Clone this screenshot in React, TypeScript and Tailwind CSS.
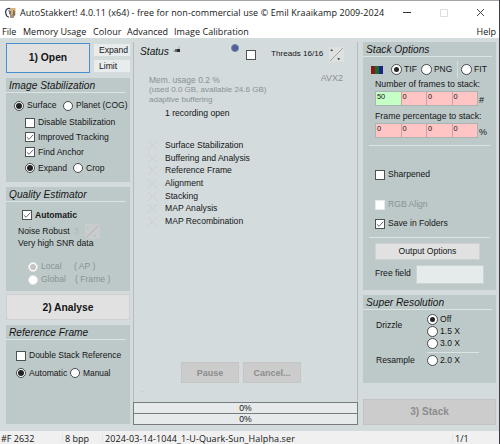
import type { ReactNode } from 'react';
import { clsx } from 'clsx';

interface ControlProps {
  label?: string;
  checked?: boolean;
  disabled?: boolean;
  bold?: boolean;
  large?: boolean;
  className?: string;
}

function Radio({ label, checked, disabled, large, className }: ControlProps) {
  return (
    <label
      className={clsx(
        'flex shrink-0 items-center whitespace-pre',
        large ? 'gap-[2px]' : 'gap-[3px]',
        disabled && 'text-[#899294]',
        className,
      )}
    >
      <span
        className={clsx(
          'flex shrink-0 items-center justify-center rounded-full border bg-white',
          large ? 'size-[11px]' : 'size-[10px]',
          disabled ? 'border-[#dfe3e3]' : 'border-[#454a4a]',
        )}
      >
        {checked && (
          <span
            className={clsx(
              'shrink-0 rounded-full',
              large ? 'size-[5px]' : 'size-[6px]',
              disabled ? 'bg-[#c4c4c4]' : 'bg-[#222]',
            )}
          />
        )}
      </span>
      {label}
    </label>
  );
}

function Check({ label, checked, disabled, bold, className }: ControlProps) {
  return (
    <label
      className={clsx(
        'flex shrink-0 items-center gap-[3px] whitespace-pre',
        disabled && 'text-[#899294]',
        bold && 'font-bold',
        className,
      )}
    >
      <span
        className={clsx(
          'flex size-[10px] shrink-0 items-center justify-center border bg-white',
          disabled ? 'border-[#e6eaea]' : 'border-[#4d5252]',
        )}
      >
        {checked && (
          <svg viewBox="0 0 8 8" className="size-2 shrink-0" fill="none" stroke="#555" strokeWidth="0.9">
            <path d="M0.8 4.2 3 6.3 7.3 1.7" />
          </svg>
        )}
      </span>
      {label}
    </label>
  );
}

function Spin({ faded, className }: { faded?: boolean; className?: string }) {
  return (
    <svg viewBox="0 0 15 15" className={clsx('size-[15px] shrink-0', className)}>
      <path d="M0 0h15v15H0z" fill={faded ? '#c9cccc' : '#dfe0e0'} />
      <path d="M1 14 14 1" stroke={faded ? '#b5a9a9' : '#8d9191'} strokeWidth="0.8" />
      <path
        d="M1.7 3.6h2L2.7 2.4zM8.7 11.6h2l-1 1.2z"
        fill={faded ? '#b3a5a5' : '#111'}
        stroke={faded ? 'none' : '#111'}
        strokeWidth="0.4"
      />
    </svg>
  );
}

function Panel({ title, className, children }: { title: string; className?: string; children: ReactNode }) {
  return (
    <section className={clsx('shrink-0 bg-[#bdc9c9]', className)}>
      <h2 className="mr-1 flex h-[15px] items-center border-b border-[#dce3e3] pt-[2px] pl-[3px] text-[10.2px] whitespace-nowrap italic">
        {title}
      </h2>
      {children}
    </section>
  );
}

function Row({ className, children }: { className?: string; children: ReactNode }) {
  return <div className={clsx('flex items-center whitespace-nowrap', className)}>{children}</div>;
}

function Cells({ values, unit }: { values: string[]; unit: string }) {
  return (
    <Row className="ml-3 h-[15px]">
      <div className="flex h-[15px] w-[103px] border border-[#abb3b3]">
        {values.map((v, i) => (
          <span
            key={i}
            className={clsx(
              'flex-1 pl-[1px] text-[7.4px] leading-[10px]',
              i > 0 && 'border-l border-[#c6a5a5]',
              v === '50' ? 'bg-[#c5ffc5]' : 'bg-[#ffc5c5]',
            )}
          >
            {v}
          </span>
        ))}
      </div>
      <span className="pt-1 pl-[1px] text-[9px]">{unit}</span>
    </Row>
  );
}

const STEPS = [
  'Surface Stabilization',
  'Buffering and Analysis',
  'Reference Frame',
  'Alignment',
  'Stacking',
  'MAP Analysis',
  'MAP Recombination',
];

function TitleBar() {
  return (
    <header className="flex h-6 items-center border-t border-[#a5a5a5] pl-[5px] font-['Open_Sans','Noto_Sans',sans-serif] text-[9px] whitespace-nowrap">
      <svg viewBox="0 0 12 12" className="size-3 shrink-0">
        <path d="M5 1h5.5v7L8 11H5z" fill="#d5b17b" />
        <path d="M5 1.5C1 1 .3 4 .8 6.5S3 10 4 10" fill="none" stroke="#26304c" strokeWidth="1.2" />
        <path d="M4 4v3l2 1V4zM8 3v5l2 1V4z" fill="#89705a" />
        <path d="M6 8v3M8 7v4M3 4l2-1" stroke="#5b6689" strokeWidth="0.8" />
      </svg>
      <span className="w-[365px] pl-[3px] tracking-[0.08px]">
        AutoStakkert! 4.0.11 (x64) - free for non-commercial use © Emil Kraaikamp 2009-2024
      </span>
      <svg viewBox="0 0 84 10" className="ml-[20px] h-[10px] w-[84px] shrink-0" fill="none" stroke="#333">
        <path d="M1 4.5h8" />
        <path d="M38.5 1.5h7v7h-7z" stroke="#ddd" />
        <path d="m75 1 7 7m0-7-7 7" strokeWidth="0.9" />
      </svg>
    </header>
  );
}

function MenuBar() {
  return (
    <nav className="flex h-[14px] items-center pr-[3px] pl-[2px] font-['Open_Sans','Noto_Sans',sans-serif] text-[9px] whitespace-nowrap">
      <span className="w-[21px]">File</span>
      <span className="w-[70px]">Memory Usage</span>
      <span className="w-[34px] tracking-[0.1px]">Colour</span>
      <span className="w-[47px]">Advanced</span>
      <span className="tracking-[0.05px]">Image Calibration</span>
      <span className="ml-auto">Help</span>
    </nav>
  );
}

function LeftColumn() {
  return (
    <aside className="flex w-[133px] shrink-0 flex-col pt-[5px] pl-[6px]">
      <div className="flex h-[30px] w-[124px] items-center justify-between">
        <button className="h-[30px] w-[84px] border border-[#4a90cf] bg-[#e1e1e1] text-[10.3px] font-bold">1) Open</button>
        <div className="flex w-9 flex-col gap-1">
          <button className="h-3 bg-[#e9eced] pl-[5px] text-left">Expand</button>
          <button className="h-3 bg-[#e9eced] pl-[5px] text-left">Limit</button>
        </div>
      </div>

      <Panel title="Image Stabilization" className="mt-[5px] h-[104px] w-[124px]">
        <Row className="h-6 pt-[1px] pl-2">
          <Radio label="Surface" checked className="w-[49px]" />
          <Radio label="Planet (COG)" className="text-[8.5px]" />
        </Row>
        <div className="pl-[19px]">
          <Row className="h-[11px]">
            <Check label="Disable Stabilization" />
          </Row>
          <Row className="mt-1 h-[10px]">
            <Check label="Improved Tracking" checked />
          </Row>
          <Row className="mt-[5px] h-[10px]">
            <Check label="Find Anchor" checked />
          </Row>
          <Row className="mt-[6px] h-[10px]">
            <Radio label="Expand" checked className="w-[48px]" />
            <Radio label="Crop" />
          </Row>
        </div>
      </Panel>

      <Panel title="Quality Estimator" className="mt-[5px] h-[104px] w-[124px]">
        <Row className="h-[22px] pt-1 pl-4">
          <Check label="Automatic" checked bold />
        </Row>
        <Row className="h-[15px] pl-3">
          <span className="w-[56px]">Noise Robust</span>
          <span className="w-[11px] text-[#aeb8b9]">3</span>
          <Spin faded />
        </Row>
        <Row className="h-2 pl-3">Very high SNR data</Row>
        <Row className="mt-[13px] h-[13px] pl-[22px]">
          <Radio label="Local" disabled checked className="w-[46px]" />
          <span className="text-[#899294]">( AP )</span>
        </Row>
        <Row className="h-[13px] pl-[22px]">
          <Radio label="Global" disabled className="w-[47px]" />
          <span className="text-[#899294]">( Frame )</span>
        </Row>
      </Panel>

      <button className="mt-[3px] h-[26px] w-[124px] shrink-0 border border-[#cfcfcf] bg-[#e1e1e1] pt-[2px] text-[10.3px] font-bold">
        2) Analyse
      </button>

      <Panel title="Reference Frame" className="mt-[5px] h-[99px] w-[124px]">
        <Row className="mt-[10px] h-[11px] pl-[10px]">
          <Check label="Double Stack Reference" className="text-[8.5px]" />
        </Row>
        <Row className="mt-[7px] h-[10px] pl-[10px]">
          <Radio label="Automatic" checked className="w-[54px]" />
          <Radio label="Manual" className="text-[8.4px]" />
        </Row>
      </Panel>
    </aside>
  );
}

function StatusColumn() {
  return (
    <main className="flex w-[225px] shrink-0 flex-col pt-1">
      <div className="flex h-[360px] flex-col border-x border-[#b4bcbd]">
        <div className="flex h-[22px] items-start pl-[6px] whitespace-nowrap">
          <span className="w-[33px] text-[10.2px] leading-[19px] italic">Status</span>
          <svg viewBox="0 0 8 8" className="mt-[3px] size-2">
            <path d="M0 5h2v2H0z" fill="#b0b5b6" />
            <path d="M2 4h2v3H2z" fill="#65696a" />
            <path d="M4 4h3v3H4z" fill="#292d2e" />
            <path d="M5 1h2v3H5z" fill="#c2c5c5" />
          </svg>
          <span className="mt-[2px] ml-[50px] size-2 rounded-full border border-[#7782a9] bg-[#505e99]" />
          <Check className="mt-[8px] ml-[7px]" />
          <span className="mt-[6px] ml-[15px] w-[58px] text-[8.1px] leading-3">Threads 16/16</span>
          <Spin className="mt-[5px]" />
        </div>
        <div className="mt-[11px] flex h-[10px] items-center justify-between pr-[14px] pl-[15px] text-[#899294]">
          <span className="text-[8.5px]">Mem. usage 0.2 %</span>
          <span className="-mt-[3px] text-[9px]">AVX2</span>
        </div>
        <Row className="h-[10px] pl-[15px] text-[8px] text-[#899294]">(used 0.0 GB, available 24.6 GB)</Row>
        <Row className="h-[10px] pl-[15px] text-[8px] text-[#899294]">adaptive buffering</Row>
        <Row className="mt-[2px] h-[12px] pl-[31px]">1 recording open</Row>
        <ul className="mt-[20px] pl-[13px]">
          {STEPS.map((step) => (
            <li key={step} className="flex h-[12.7px] items-center gap-[7px] whitespace-nowrap">
              <svg viewBox="0 0 11 11" className="size-[11px]" stroke="#c9cfd0" strokeWidth="1">
                <path d="m1 1 9 9m0-9-9 9" />
              </svg>
              {step}
            </li>
          ))}
        </ul>
        <div className="mt-auto flex justify-start gap-1 pl-[47px] font-bold text-[#8d8d8d]">
          <button className="h-[21px] w-[58px] border border-[#c4c5c5] bg-[#cccccc] pt-px text-[9px]">Pause</button>
          <button className="h-[21px] w-[58px] border border-[#c4c5c5] bg-[#cccccc] pt-px text-[9px]">Cancel...</button>
        </div>
        <div className="mt-[8px] ml-2 h-[11px]">
          <span className="block size-px bg-[#b5bdbe]" />
        </div>
      </div>
      <div className="h-[12px] w-[225px] border border-[#777d7e] bg-[#e6eaeb] text-center leading-[11px]">0%</div>
      <div className="h-[11px] w-[225px] border border-t-0 border-[#777d7e] bg-[#e6eaeb] text-center leading-[10px]">0%</div>
    </main>
  );
}

function RightColumn() {
  return (
    <aside className="flex flex-1 flex-col pt-1 pl-[5px]">
      <Panel title="Stack Options" className="h-[248px] w-[133px]">
        <Row className="h-[21px] pt-1 pl-2">
          <span className="flex h-2 w-[12px]">
            <i className="flex-1 bg-[#8c1717]" />
            <i className="flex-1 bg-[#176b2b]" />
            <i className="flex-1 bg-[#1c2283]" />
          </span>
          <Radio label="TIF" checked large className="ml-2 w-[30px]" />
          <Radio label="PNG" large className="w-9 text-[8.4px]" />
          <span className="h-[17px] w-1 border-l border-[#d5dddd]" />
          <Radio label="FIT" large />
        </Row>
        <Row className="h-[12px] pl-[12px] text-[8.75px]">Number of frames to stack:</Row>
        <div className="mt-[1px]">
          <Cells values={['50', '0', '0', '0']} unit="#" />
        </div>
        <Row className="mt-[4px] h-[12px] pl-[12px] text-[8.75px]">Frame percentage to stack:</Row>
        <div className="mt-[1px]">
          <Cells values={['0', '0', '0', '0']} unit="%" />
        </div>
        <hr className="mx-[6px] mt-[7px] border-[#dce3e3]" />
        <Row className="mt-[23px] h-[11px] pl-[12px]">
          <Check label="Sharpened" />
        </Row>
        <Row className="mt-[19px] h-[11px] pl-[12px]">
          <Check label="RGB Align" disabled />
        </Row>
        <Row className="mt-[8px] h-[11px] pl-[12px]">
          <Check label="Save in Folders" checked />
        </Row>
        <hr className="mx-[6px] mt-[8px] border-[#dce3e3]" />
        <button className="mt-[5px] ml-[12px] block h-[17px] w-[105px] border border-[#d0d2d2] bg-[#e1e1e1] text-[8.6px]">
          Output Options
        </button>
        <Row className="mt-[5px] h-[19px] pl-[12px]">
          <span className="w-[41px] pb-[2px]">Free field</span>
          <span className="h-[19px] w-[68px] border border-[#cbd3d4] bg-[#e5eaeb]" />
        </Row>
      </Panel>

      <Panel title="Super Resolution" className="mt-[5px] h-[88px] w-[133px]">
        <div className="flex pt-[4px] pl-[13px]">
          <span className="w-[51px] pt-[6px] leading-[11px]">Drizzle</span>
          <div className="flex w-[52px] flex-col gap-px">
            <Radio label="Off" checked large className="h-[11px]" />
            <Radio label="1.5 X" large className="h-[11px]" />
            <Radio label="3.0 X" large className="h-[11px]" />
            <hr className="mt-[2px] border-[#dce3e3]" />
          </div>
        </div>
        <Row className="mt-[2px] h-[11px] pl-[13px]">
          <span className="w-[51px]">Resample</span>
          <Radio label="2.0 X" large />
        </Row>
      </Panel>

      <button className="mt-4 h-[26px] w-[133px] shrink-0 border border-[#c3c3c3] bg-[#cccccc] pt-px text-[10.1px] font-bold text-[#8d8d8d]">
        3) Stack
      </button>
    </aside>
  );
}

function StatusBar() {
  return (
    <footer className="flex h-[13px] items-center bg-[#f0f0f0] pt-px pl-[1px] font-['Open_Sans','Noto_Sans',sans-serif] text-[9px] whitespace-nowrap">
      <span className="w-[61px]">#F 2632</span>
      <span className="w-10 border-l border-[#e4e4e4] pl-[2px]">8 bpp</span>
      <span className="w-[350px] border-l border-[#e4e4e4] pl-[2px] tracking-[0.1px]">
        2024-03-14-1044_1-U-Quark-Sun_Halpha.ser
      </span>
      <span className="border-l border-[#e4e4e4] pl-[2px]">1/1</span>
    </footer>
  );
}

export default function App() {
  return (
    <div className="h-[444px] w-[500px] overflow-hidden border-r border-[#3b3b46] bg-white font-['Liberation_Sans',Arial,sans-serif] text-[8.6px] leading-none text-[#151515]">
      <TitleBar />
      <MenuBar />
      <div className="flex h-[393px] bg-[#d3dbdd]">
        <LeftColumn />
        <StatusColumn />
        <RightColumn />
      </div>
      <StatusBar />
    </div>
  );
}
